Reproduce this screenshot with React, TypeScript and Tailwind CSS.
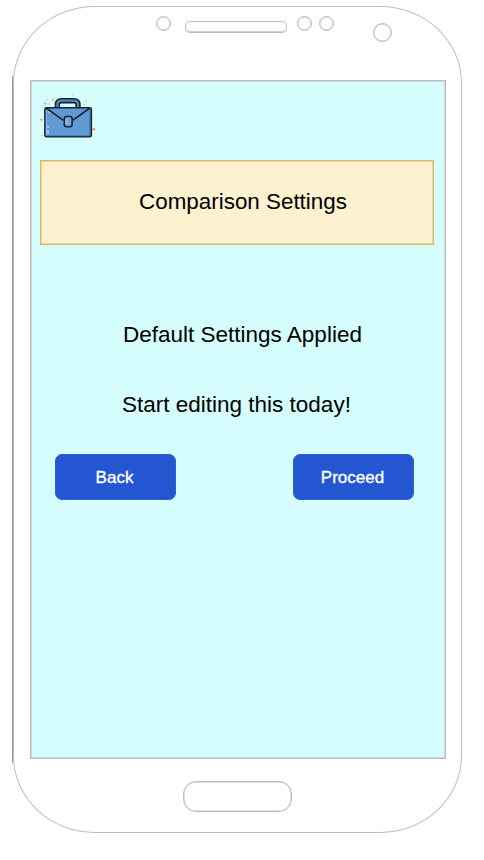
function Briefcase() {
  return (
    <svg width="60" height="46" viewBox="0 0 60 46" fill="none" className="block">
      <g fill="#f0dc72">
        <circle cx="13" cy="4.8" r="1.5" />
        <circle cx="46" cy="6.3" r="1.2" />
      </g>
      <g fill="#8cc4f2">
        <circle cx="5" cy="8.5" r="1.2" />
        <circle cx="9" cy="9" r="0.8" />
        <circle cx="53" cy="24.5" r="0.6" />
      </g>
      <g fill="#df8148">
        <circle cx="1.5" cy="24.8" r="1.1" />
        <circle cx="53.8" cy="34.3" r="1.3" />
      </g>
      <g fill="#80998f">
        <circle cx="6.5" cy="4.5" r="0.6" />
        <circle cx="32.5" cy="0.7" r="0.5" />
        <circle cx="44.3" cy="9.5" r="0.6" />
        <circle cx="2" cy="40.5" r="0.5" />
      </g>
      <g transform="translate(-2 0)">
        <path d="M19.4 12V9.6Q19.4 5.7 23.4 5.7H36Q40 5.7 40 9.6V12" stroke="#172333" strokeWidth="5.4" />
        <path d="M19.4 12V9.6Q19.4 5.7 23.4 5.7H36Q40 5.7 40 9.6V12" stroke="#5488bd" strokeWidth="2.3" />
        <rect x="6.9" y="12.8" width="46.4" height="29" rx="1.6" fill="#6199d3" stroke="#172333" strokeWidth="1.6" />
        <path d="M8.4 14.5V40.3" stroke="#80b7ea" strokeWidth="1.2" />
        <path d="M51.8 14.5V40.8H9" stroke="#386aa3" strokeWidth="0.8" />
        <path d="M10 35V39M10 31V33" stroke="#d8f1ff" strokeWidth="1" />
        <path d="M10 15.5L12 18.5" stroke="#c5e4fa" strokeWidth="1.2" />
        <path d="M8 13L25.5 25.3M52 13L34.5 25.3" stroke="#172333" strokeWidth="1.6" />
        <rect x="26.3" y="21.5" width="7.8" height="10.2" rx="2.2" fill="#76a6d7" stroke="#172333" strokeWidth="1.6" />
        <path d="M28 24V29" stroke="#a3cff2" strokeWidth="0.9" />
      </g>
    </svg>
  );
}

function Button({ label }: { label: string }) {
  return (
    <button className="h-[46px] w-[121px] rounded-[7px] border border-[#2d60d6] bg-[#2456d1] pr-0.5 text-[17px] leading-none text-white [-webkit-text-stroke:0.35px_white]">
      {label}
    </button>
  );
}

export default function App() {
  return (
    <div className="h-[860px] w-[484px] overflow-hidden bg-white pl-[12px] pt-[6px] font-['Liberation_Sans',Arial,sans-serif] text-black">
      <div className="relative h-[827px] w-[450px]">
        <div className="absolute left-0 top-[70px] h-[687px] w-px bg-[#969696]" />
        <div className="ml-px flex h-[827px] w-[449px] flex-col rounded-[82px/77px] border border-[#bdbdbd] bg-white">
          <header className="flex h-[73px] shrink-0 items-start pl-[142px] pt-[9px]">
            <span className="h-[15px] w-[15px] rounded-full border border-[#bdbdbd] shadow-[inset_0_0_0_0.5px_#bdbdbd]" />
            <span className="ml-[14px] mt-[5px] h-[12px] w-[102px] rounded-[5px] border border-[#bdbdbd] shadow-[inset_0_-1px_0_0_#d4d4d4]" />
            <span className="ml-[10px] h-[15px] w-[15px] rounded-full border border-[#bdbdbd] shadow-[inset_0_0_0_0.5px_#bdbdbd]" />
            <span className="ml-[7px] h-[15px] w-[15px] rounded-full border border-[#bdbdbd] shadow-[inset_0_0_0_0.5px_#bdbdbd]" />
            <span className="ml-[39px] mt-[7px] h-[19px] w-[19px] rounded-full border border-[#bdbdbd] shadow-[inset_0_0_0_0.5px_#bdbdbd]" />
          </header>
          <main className="ml-[16px] h-[679px] w-[416px] shrink-0 border border-[#bdbdbd] bg-[#d5fdfe] shadow-[inset_0_0_0_1px_#c9dcdc]">
            <div className="ml-[9px] mt-[14px] h-[46px]">
              <Briefcase />
            </div>
            <h1 className="ml-[9px] mt-[19px] flex h-[85px] w-[394px] items-center justify-center border border-[#d8bb60] bg-[#fdf1d0] pl-[12px] text-[22.4px] leading-none shadow-[inset_0_0_0_0.5px_#d8bb60]">
              Comparison Settings
            </h1>
            <p className="ml-[92px] mt-[77px] h-[26px] whitespace-nowrap text-[22.5px] leading-[26px]">Default Settings Applied</p>
            <p className="ml-[91px] mt-[44px] h-[26px] whitespace-nowrap text-[22.5px] leading-[26px]">Start editing this today!</p>
            <div className="ml-[24px] mt-[36px] flex gap-[117px]">
              <Button label="Back" />
              <Button label="Proceed" />
            </div>
          </main>
          <footer className="flex pl-[169px] pt-[22px]">
            <span className="h-[31px] w-[109px] rounded-[13px] border border-[#bdbdbd] shadow-[inset_0_0_0_0.5px_#bdbdbd]" />
          </footer>
        </div>
      </div>
    </div>
  );
}
